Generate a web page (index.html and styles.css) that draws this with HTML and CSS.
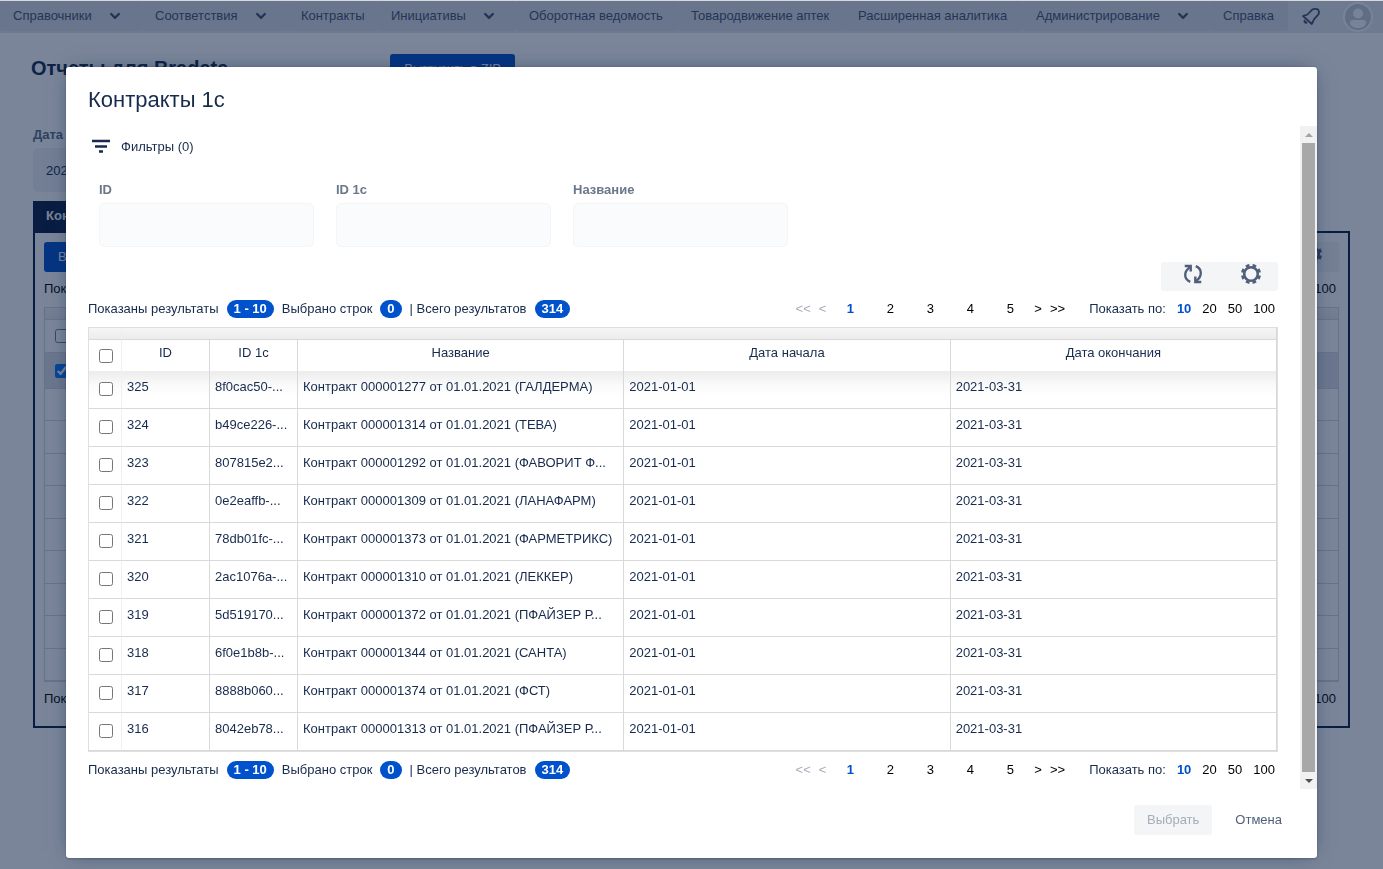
FILE: index.html
```html
<!DOCTYPE html>
<html lang="ru">
<head>
<meta charset="utf-8">
<title>Контракты 1с</title>
<link rel="stylesheet" href="styles.css">
</head>
<body>
<svg class="sprite" aria-hidden="true">
  <symbol id="chevron" viewBox="0 0 12 12"><path d="M2.2 4 6 7.8 9.800 4" fill="none" stroke="currentColor" stroke-width="2.400" stroke-linecap="round" stroke-linejoin="round"/></symbol>
  <symbol id="gear" viewBox="0 0 24 24"><circle cx="12" cy="12" r="7.400" fill="none" stroke="currentColor" stroke-width="2.800"/><circle cx="12" cy="12" r="9.600" fill="none" stroke="currentColor" stroke-width="2.800" pathLength="80" stroke-dasharray="5.400 4.600" stroke-dashoffset="-2.300"/></symbol>
  <symbol id="refresh" viewBox="0 0 24 24"><g fill="none" stroke="currentColor" stroke-width="2.600"><path d="M9 20.500C2 17.500 1.500 10 8.500 4.500"/><path d="M3 3.300h6.500v6"/><path d="M15 3.500c7 3 7.500 10.500.5 16"/><path d="M21 20.700h-6.500v-6"/></g></symbol>
</svg>

<div class="page">
  <nav class="nav">
    <a class="nav-item" href="#">Справочники<svg class="chevron"><use href="#chevron"/></svg></a>
    <a class="nav-item" href="#">Соответствия<svg class="chevron"><use href="#chevron"/></svg></a>
    <a class="nav-item" href="#">Контракты</a>
    <a class="nav-item" href="#">Инициативы<svg class="chevron"><use href="#chevron"/></svg></a>
    <a class="nav-item" href="#">Оборотная ведомость</a>
    <a class="nav-item" href="#">Товародвижение аптек</a>
    <a class="nav-item" href="#">Расширенная аналитика</a>
    <a class="nav-item" href="#">Администрирование<svg class="chevron"><use href="#chevron"/></svg></a>
    <a class="nav-item" href="#">Справка</a>
    <div class="nav-tools">
      <button class="icon-button" type="button" aria-label="Уведомления"><svg class="bell" viewBox="0 0 20 20"><path d="M2 9 10.800 17 13 12.300 17.800 6.800Q18.300 3 16.500 2.200 13.500 1.500 11.500 2.300L6.500 7.500Z" fill="none" stroke="currentColor" stroke-width="1.800" stroke-linejoin="round"/><path d="M3.200 12.400a2.200 2.200 0 0 0 3.600 3.400Z" fill="currentColor"/></svg></button>
      <button class="icon-button" type="button" aria-label="Профиль"><svg class="avatar" viewBox="0 0 30 30"><circle cx="15" cy="15" r="14" fill="#c5cad3" stroke="#fafbfc" stroke-width="2"/><circle cx="15" cy="11.500" r="5" fill="#fafbfc"/><path d="M7 20.500Q7 18 10 18h10q3 0 3 2.500c0 3-3 5.500-8 5.500s-8-2.500-8-5.500Z" fill="#fafbfc"/></svg></button>
    </div>
  </nav>

  <main class="report">
    <header class="report-head">
      <h1>Отчеты для Bradata</h1>
      <button class="primary" type="button">Выгрузить в ZIP</button>
    </header>
    <div class="date-field">
      <label for="date">Дата</label>
      <input id="date" type="text" value="2021">
    </div>
    <button class="tab" type="button">Контракты</button>
    <section class="panel">
      <div class="panel-tools">
        <button class="primary" type="button">Выбрать</button>
        <div class="tools"><button type="button" aria-label="Настройки"><svg><use href="#gear"/></svg></button></div>
      </div>
      <div class="panel-status"><span>Показаны</span><span>100</span></div>
      <table class="back-table">
        <thead>
          <tr class="band"><td></td><td></td></tr>
          <tr class="labels"><th><input type="checkbox" aria-label="Выбрать все"></th><th></th></tr>
        </thead>
        <tbody>
          <tr class="selected"><td><input type="checkbox" checked aria-label="Выбрать строку"></td><td></td></tr>
          <tr><td></td><td></td></tr><tr><td></td><td></td></tr><tr><td></td><td></td></tr>
          <tr><td></td><td></td></tr><tr><td></td><td></td></tr><tr><td></td><td></td></tr>
          <tr><td></td><td></td></tr><tr><td></td><td></td></tr><tr><td></td><td></td></tr>
        </tbody>
      </table>
      <div class="panel-status panel-status-end"><span>Показаны</span><span>100</span></div>
    </section>
  </main>
</div>

<div class="overlay">
  <div class="modal" role="dialog" aria-labelledby="modal-title">
    <h2 id="modal-title">Контракты 1с</h2>
    <div class="modal-body">
      <div class="content">
        <button class="filter-toggle" type="button"><svg viewBox="0 0 20 16"><path d="M1 2h18M4 7.500h12M8 12.500h4" stroke="currentColor" stroke-width="2.400"/></svg>Фильтры (0)</button>
        <div class="filters">
          <div class="field"><label for="f-id">ID</label><input id="f-id" type="text"></div>
          <div class="field"><label for="f-1c">ID 1с</label><input id="f-1c" type="text"></div>
          <div class="field"><label for="f-name">Название</label><input id="f-name" type="text"></div>
        </div>
        <div class="tools-row"><div class="tools">
          <button type="button" aria-label="Обновить"><svg><use href="#refresh"/></svg></button>
          <button type="button" aria-label="Настройки"><svg><use href="#gear"/></svg></button>
        </div></div>

        <div class="status">
          <div class="summary"><span>Показаны результаты</span><b>1 - 10</b><span>Выбрано строк</span><b>0</b><span>| Всего результатов</span><b>314</b></div>
          <div class="pager">
            <button type="button" disabled>&lt;&lt;</button><button type="button" disabled>&lt;</button>
            <button class="num current" type="button">1</button><button class="num" type="button">2</button><button class="num" type="button">3</button><button class="num" type="button">4</button><button class="num" type="button">5</button>
            <button type="button">&gt;</button><button type="button">&gt;&gt;</button>
          </div>
          <div class="sizes"><span>Показать по:</span><button class="current" type="button">10</button><button type="button">20</button><button type="button">50</button><button type="button">100</button></div>
        </div>

        <table class="grid">
          <colgroup><col class="c-check"><col class="c-id"><col class="c-id"><col><col><col></colgroup>
          <thead>
            <tr class="band"><td></td><td colspan="5"></td></tr>
            <tr class="labels"><th><input type="checkbox" aria-label="Выбрать все"></th><th>ID</th><th>ID 1с</th><th>Название</th><th>Дата начала</th><th>Дата окончания</th></tr>
          </thead>
          <tbody>
            <tr><td><input type="checkbox" aria-label="325"></td><td>325</td><td>8f0cac50-...</td><td>Контракт 000001277 от 01.01.2021 (ГАЛДЕРМА)</td><td>2021-01-01</td><td>2021-03-31</td></tr>
            <tr><td><input type="checkbox" aria-label="324"></td><td>324</td><td>b49ce226-...</td><td>Контракт 000001314 от 01.01.2021 (ТЕВА)</td><td>2021-01-01</td><td>2021-03-31</td></tr>
            <tr><td><input type="checkbox" aria-label="323"></td><td>323</td><td>807815e2...</td><td>Контракт 000001292 от 01.01.2021 (ФАВОРИТ Ф...</td><td>2021-01-01</td><td>2021-03-31</td></tr>
            <tr><td><input type="checkbox" aria-label="322"></td><td>322</td><td>0e2eaffb-...</td><td>Контракт 000001309 от 01.01.2021 (ЛАНАФАРМ)</td><td>2021-01-01</td><td>2021-03-31</td></tr>
            <tr><td><input type="checkbox" aria-label="321"></td><td>321</td><td>78db01fc-...</td><td>Контракт 000001373 от 01.01.2021 (ФАРМЕТРИКС)</td><td>2021-01-01</td><td>2021-03-31</td></tr>
            <tr><td><input type="checkbox" aria-label="320"></td><td>320</td><td>2ac1076a-...</td><td>Контракт 000001310 от 01.01.2021 (ЛЕККЕР)</td><td>2021-01-01</td><td>2021-03-31</td></tr>
            <tr><td><input type="checkbox" aria-label="319"></td><td>319</td><td>5d519170...</td><td>Контракт 000001372 от 01.01.2021 (ПФАЙЗЕР Р...</td><td>2021-01-01</td><td>2021-03-31</td></tr>
            <tr><td><input type="checkbox" aria-label="318"></td><td>318</td><td>6f0e1b8b-...</td><td>Контракт 000001344 от 01.01.2021 (САНТА)</td><td>2021-01-01</td><td>2021-03-31</td></tr>
            <tr><td><input type="checkbox" aria-label="317"></td><td>317</td><td>8888b060...</td><td>Контракт 000001374 от 01.01.2021 (ФСТ)</td><td>2021-01-01</td><td>2021-03-31</td></tr>
            <tr><td><input type="checkbox" aria-label="316"></td><td>316</td><td>8042eb78...</td><td>Контракт 000001313 от 01.01.2021 (ПФАЙЗЕР Р...</td><td>2021-01-01</td><td>2021-03-31</td></tr>
          </tbody>
        </table>

        <div class="status">
          <div class="summary"><span>Показаны результаты</span><b>1 - 10</b><span>Выбрано строк</span><b>0</b><span>| Всего результатов</span><b>314</b></div>
          <div class="pager">
            <button type="button" disabled>&lt;&lt;</button><button type="button" disabled>&lt;</button>
            <button class="num current" type="button">1</button><button class="num" type="button">2</button><button class="num" type="button">3</button><button class="num" type="button">4</button><button class="num" type="button">5</button>
            <button type="button">&gt;</button><button type="button">&gt;&gt;</button>
          </div>
          <div class="sizes"><span>Показать по:</span><button class="current" type="button">10</button><button type="button">20</button><button type="button">50</button><button type="button">100</button></div>
        </div>
      </div>
      <div class="scrollbar" aria-hidden="true">
        <svg viewBox="0 0 17 17"><path d="M5 11h8L9 7Z" fill="#a3a3a3"/></svg>
        <div class="thumb"></div>
        <svg viewBox="0 0 17 17"><path d="M5 7h8l-4 4Z" fill="#505050"/></svg>
      </div>
    </div>
    <footer class="modal-foot">
      <button class="choose" type="button" disabled>Выбрать</button>
      <button class="cancel" type="button">Отмена</button>
    </footer>
  </div>
</div>
</body>
</html>
```

FILE: styles.css
```css
* { box-sizing: border-box; }
html { height: 100%; }
body {
  margin: 0;
  min-height: 100%;
  border-top: 1px solid #d5d8dd;
  background: #fff;
  color: #172b4d;
  font: 13px/20px "Liberation Sans", Arial, sans-serif;
  overflow: hidden;
}
button, input { font: inherit; color: inherit; }
button { padding: 0; border: 0; background: none; white-space: nowrap; }
input[type="checkbox"] { display: block; width: 14px; height: 14px; margin: 0 auto; }
.sprite { position: absolute; width: 0; height: 0; }

/* navigation */
.nav {
  display: grid;
  grid-template-columns: 142fr 146fr 90fr 138fr 162fr 167fr 178fr 187fr 78fr 95fr;
  height: 32px;
  background: #e4e7ea;
}
.nav-item {
  display: flex;
  align-items: center;
  height: 30px;
  padding-left: 13px;
  border-radius: 3px;
  background: #dadce4;
  color: #42526e;
  text-decoration: none;
  white-space: nowrap;
}
.chevron { width: 12px; height: 12px; margin-left: auto; margin-right: 21px; }
.nav-tools { display: flex; align-items: center; justify-content: flex-end; gap: 22px; padding-right: 10px; }
.icon-button { display: flex; color: #42526e; }
.bell { width: 20px; height: 20px; }
.avatar { width: 30px; height: 30px; }

/* report page */
.report { padding: 21px 33px 0 31px; }
.report-head { display: flex; align-items: center; gap: 162px; height: 30px; }
.report-head h1 { margin: 0; font-size: 20px; line-height: 26px; padding-bottom: 2px; }
.primary { height: 30px; padding: 0 14px; border-radius: 3px; background: #0052cc; color: #fff; }
.date-field { margin: 41px 0 0 2px; width: 215px; color: #5e6c84; }
.date-field label { display: block; font-weight: bold; }
.date-field input { width: 100%; height: 44px; margin-top: 3px; padding: 0 12px; border: 1px solid #f0f1f4; border-radius: 5px; background: #f0f1f4; color: #172b4d; }
.tab { display: block; height: 30px; margin: 9px 0 0 2px; padding: 0 13px; background: #091e42; color: #fff; font-weight: bold; }
.panel { margin-left: 2px; padding: 9px 9px 17px; border: 2px solid #091e42; }
.panel-tools { display: flex; justify-content: space-between; }
.panel-status { display: flex; justify-content: space-between; padding: 7px 3px 8px 0; color: #000; }
.panel-status-end { padding-bottom: 0; }
.back-table { width: 100%; border-collapse: separate; border-spacing: 0; border: 1px solid #d5d8dd; }
.back-table td, .back-table th { padding: 0; border-bottom: 1px solid #d5d8dd; }
.back-table td:first-child, .back-table th:first-child { width: 33px; }
.back-table tbody tr { height: 33px; }
.back-table tbody tr:nth-child(even) { height: 32px; }
.back-table tbody tr.selected { height: 36px; background: #dfe1e6; }

/* dialog */
.overlay {
  position: fixed;
  inset: 1px 0 0;
  padding: 66px 66px 0;
  background: rgba(9, 30, 66, .54);
}
.modal {
  border-radius: 3px;
  background: #fff;
  box-shadow: 0 0 0 1px rgba(9, 30, 66, .08), 0 2px 1px rgba(9, 30, 66, .08), 0 0 20px -6px rgba(9, 30, 66, .6);
}
.modal h2 { margin: 0; padding: 21px 22px 14px; font-size: 22px; line-height: 24px; font-weight: normal; }
.modal-body { display: flex; }
.content { flex: 1; min-width: 0; padding: 11px 22px 1px; }
.filter-toggle { display: flex; align-items: center; gap: 10px; padding-left: 3px; }
.filter-toggle svg { width: 20px; height: 16px; }
.filters { display: flex; gap: 22px; padding: 23px 11px 0; }
.field { width: 215px; color: #6b778c; font-weight: bold; }
.field label { display: block; }
.field input { display: block; width: 100%; height: 44px; margin-top: 3px; border: 1px solid #f4f5f7; border-radius: 5px; background: #fafbfc; }
.tools-row { display: flex; justify-content: flex-end; padding-top: 15px; }
.tools { display: flex; gap: 4px; border-radius: 3px; background: #f4f5f7; color: #505f79; }
.tools button { display: flex; align-items: center; justify-content: center; width: 54px; height: 29px; }
.tools button:first-child:not(:last-child) { width: 59px; padding-left: 5px; }
.tools svg { width: 22px; height: 22px; margin-bottom: 5px; }

.status { display: flex; align-items: center; height: 36px; }
.summary { display: flex; align-items: center; flex: 1; gap: 8px; white-space: nowrap; }
.summary b { padding: 0 7px; border-radius: 9px; background: #0052cc; color: #fff; line-height: 18px; }
.pager { display: flex; align-items: center; color: #000; }
.pager button { padding: 0 4px; }
.pager .num { width: 40px; padding: 0; }
.pager button:disabled { color: #a5adba; }
.sizes { display: flex; align-items: center; gap: 11px; padding-left: 20px; padding-right: 3px; color: #000; }
.sizes span { color: #172b4d; }
.pager .current, .sizes .current { color: #0052cc; font-weight: bold; }

.grid { width: 100%; table-layout: fixed; border-collapse: separate; border-spacing: 0; border: 1px solid #dfdfdf; }
.c-check { width: 33px; }
.c-id { width: 88px; }
.grid td, .grid th { padding: 0 0 0 5px; overflow: hidden; white-space: nowrap; text-overflow: ellipsis; border-right: 1px solid #d9d9d9; border-bottom: 1px solid #d9d9d9; font-weight: normal; vertical-align: top; text-align: left; }
.grid td:first-child, .grid th:first-child { padding-left: 2px; border-right-color: #f0f0f0; }
.grid tbody td { height: 38px; padding-top: 6px; }
.grid tbody td:first-child { padding-top: 11px; }
.grid th { height: 31px; padding-top: 3px; padding-left: 0; text-align: center; border-bottom: 0; }
.grid th:first-child { padding-top: 9px; }
.band td { height: 12px; background: linear-gradient(#f5f5f5, #ececec); }
.back-table .labels { height: 33px; }
.grid tbody tr:first-child td { background: linear-gradient(#ececec, #fafafa 14px, #fff 26px); }

.scrollbar { display: flex; flex-direction: column; width: 17px; background: #f1f1f1; }
.scrollbar svg { width: 17px; height: 17px; }
.thumb { flex: 1; margin: 0 2px; background: #a8a8a8; }

.modal-foot { display: flex; justify-content: flex-end; gap: 10px; padding: 16px 22px 23px; }
.modal-foot button { height: 30px; padding: 0 13px; border-radius: 3px; }
.choose { background: #f4f5f7; }
.modal-foot .choose { color: #a5adba; }
.cancel { color: #505f79; }
```
